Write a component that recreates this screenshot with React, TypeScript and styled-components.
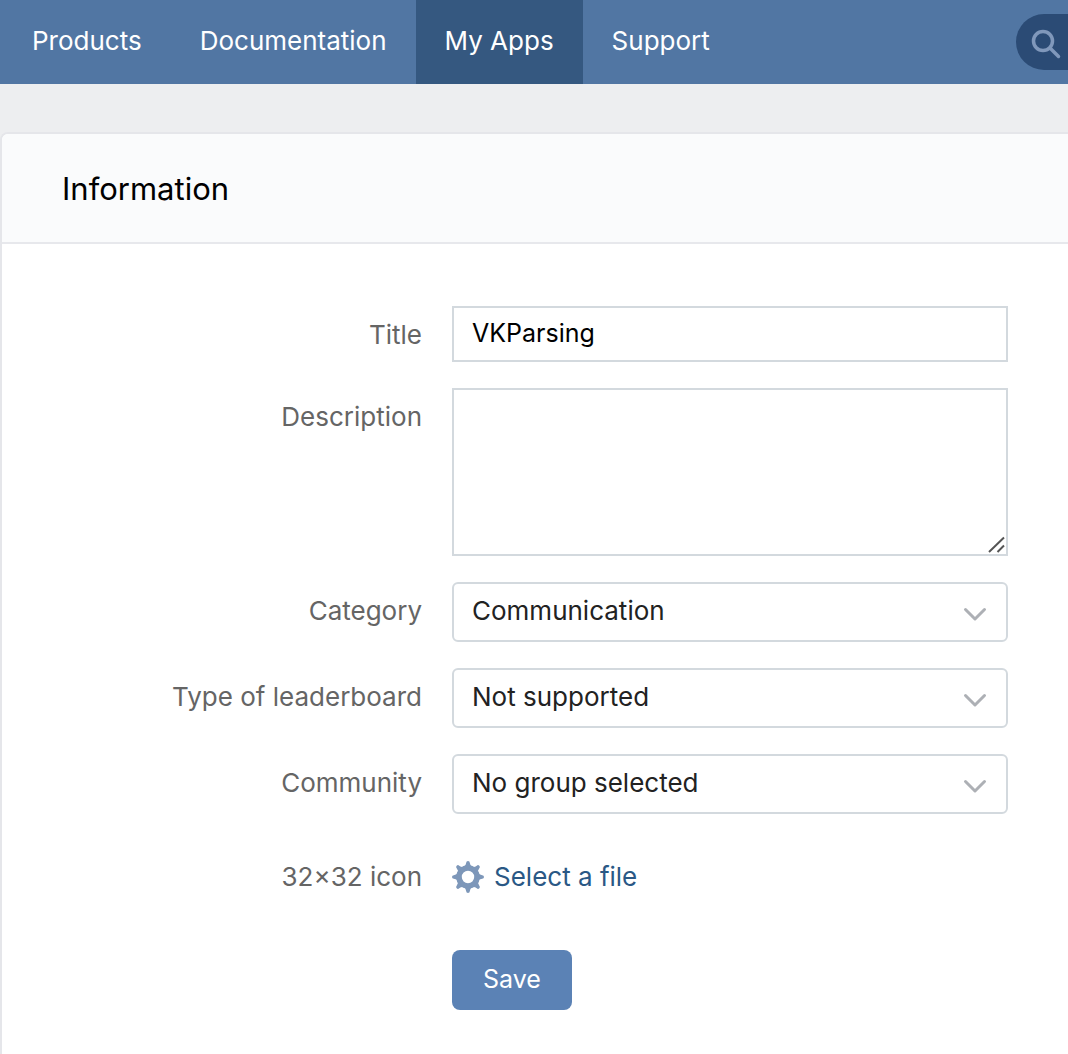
import React from "react";
import styled, { createGlobalStyle } from "styled-components";

const GlobalStyle = createGlobalStyle`
  *, *::before, *::after {
    box-sizing: border-box;
  }

  html, body, #root {
    min-height: 100vh;
  }

  body {
    margin: 0;
    background: #edeef0;
    color: #000;
    font-family: Inter, "Liberation Sans", sans-serif;
    font-size: 26px;
    line-height: 30px;
  }

  #root {
    display: flex;
    flex-direction: column;
  }

  button, input, select, textarea {
    font: inherit;
    margin: 0;
  }
`;

const TopBar = styled.header`
  display: flex;
  justify-content: space-between;
  align-items: center;
  height: 84px;
  padding-left: 3px;
  background: #5176a3;
`;

const Nav = styled.nav`
  display: flex;
  align-self: stretch;
`;

const NavLink = styled.a<{ $active?: boolean }>`
  display: flex;
  align-items: center;
  padding: 0 29px 2px;
  background: ${({ $active }) => ($active ? "#355880" : "transparent")};
  color: #fff;
  text-decoration: none;
  white-space: nowrap;
`;

const SearchButton = styled.button`
  display: flex;
  align-items: center;
  width: 52px;
  height: 56px;
  padding: 4px 0 0 15px;
  border: 0;
  border-radius: 28px 0 0 28px;
  background: #2b4b75;
  color: #8098bb;
  cursor: pointer;
`;

const Card = styled.main`
  flex: 1;
  margin-top: 48px;
  border: 2px solid #e5e6ea;
  border-width: 2px 0 0 2px;
  border-radius: 8px 0 0 0;
  background: #fff;
`;

const CardHeader = styled.div`
  padding: 37px 60px 35px;
  border-bottom: 2px solid #e7e8ec;
  border-radius: 6px 0 0 0;
  background: #fafbfc;
`;

const CardTitle = styled.h1`
  margin: 0;
  font-size: 31px;
  line-height: 36px;
  font-weight: 400;
`;

const Form = styled.form`
  display: flex;
  flex-direction: column;
  gap: 26px;
  padding: 62px 60px 44px;
`;

const Row = styled.div`
  display: grid;
  grid-template-columns: 360px minmax(0, 1fr);
  column-gap: 30px;
`;

const FileRow = styled(Row)`
  align-items: center;
  padding: 21px 0 31px;
`;

const Label = styled.label`
  padding-top: 14px;
  color: #656565;
  text-align: right;
`;

const FileLabel = styled.span`
  color: #656565;
  text-align: right;
`;

const TextInput = styled.input`
  width: 100%;
  height: 56px;
  padding: 0 18px 2px;
  border: 2px solid #d3d9de;
  border-radius: 0;
  background: #fff;
  color: #000;
  font-size: 25px;
  outline: none;
`;

const TextAreaWrap = styled.div`
  position: relative;
  display: flex;
`;

const TextArea = styled.textarea`
  width: 100%;
  height: 168px;
  padding: 10px 18px;
  border: 2px solid #d3d9de;
  border-radius: 0;
  background: #fff;
  font-size: 25px;
  outline: none;
  resize: vertical;

  &::-webkit-resizer {
    background: transparent;
  }
`;

const Grip = styled.svg`
  position: absolute;
  right: 2px;
  bottom: 2px;
  pointer-events: none;
`;

const SelectWrap = styled.div`
  position: relative;
`;

const Select = styled.select`
  display: block;
  width: 100%;
  height: 60px;
  padding: 0 60px 2px 18px;
  border: 2px solid #d3d9de;
  border-radius: 6px;
  background: #fff;
  color: #222;
  appearance: none;
  outline: none;
`;

const Chevron = styled.svg`
  position: absolute;
  top: 24px;
  right: 20px;
  pointer-events: none;
`;

const FileLink = styled.a`
  display: flex;
  align-items: center;
  justify-self: start;
  gap: 10px;
  color: #2a5885;
  text-decoration: none;
`;

const SaveButton = styled.button`
  grid-column: 2;
  justify-self: start;
  height: 60px;
  padding: 0 31px 2px;
  border: 0;
  border-radius: 8px;
  background: #5b82b5;
  color: #fff;
  font-size: 25px;
  cursor: pointer;
`;

const navItems = ["Products", "Documentation", "My Apps", "Support"];

const selects = [
  { id: "category", label: "Category", value: "Communication" },
  { id: "leaderboard", label: "Type of leaderboard", value: "Not supported" },
  { id: "community", label: "Community", value: "No group selected" },
];

const SearchIcon = () => (
  <svg width="30" height="30" viewBox="0 0 30 30" fill="none" stroke="currentColor" aria-hidden="true">
    <circle cx="12" cy="12" r="9.5" strokeWidth="3.5" />
    <path d="M19 19l8.5 8.5" strokeWidth="3.5" strokeLinecap="round" />
  </svg>
);

const teeth = [0, 45, 90, 135, 180, 225, 270, 315];

const GearIcon = () => (
  <svg width="32" height="32" viewBox="0 0 32 32" aria-hidden="true">
    <circle cx="16" cy="16" r="9" fill="none" stroke="#7d97b9" strokeWidth="5.6" />
    {teeth.map((angle) => (
      <path
        key={angle}
        d="M11.5 6q2.4-.9 2.7-4.2a1.8 1.8 0 0 1 3.6 0q.3 3.3 2.7 4.2z"
        fill="#7d97b9"
        transform={`rotate(${angle} 16 16)`}
      />
    ))}
  </svg>
);

export default function App() {
  return (
    <>
      <GlobalStyle />
      <TopBar>
        <Nav>
          {navItems.map((item) => (
            <NavLink key={item} href="#" $active={item === "My Apps"}>
              {item}
            </NavLink>
          ))}
        </Nav>
        <SearchButton type="button" aria-label="Search">
          <SearchIcon />
        </SearchButton>
      </TopBar>
      <Card>
        <CardHeader>
          <CardTitle>Information</CardTitle>
        </CardHeader>
        <Form onSubmit={(event) => event.preventDefault()}>
          <Row>
            <Label htmlFor="title">Title</Label>
            <TextInput id="title" type="text" defaultValue="VKParsing" />
          </Row>
          <Row>
            <Label htmlFor="description">Description</Label>
            <TextAreaWrap>
              <TextArea id="description" />
              <Grip width="18" height="18" viewBox="0 0 18 18" fill="none" stroke="#555" strokeWidth="2" aria-hidden="true">
                <path d="M1 16L16 1.5M9.500 16l6.500-6.500" />
              </Grip>
            </TextAreaWrap>
          </Row>
          {selects.map(({ id, label, value }) => (
            <Row key={id}>
              <Label htmlFor={id}>{label}</Label>
              <SelectWrap>
                <Select id={id} defaultValue={value}>
                  <option>{value}</option>
                </Select>
                <Chevron width="26" height="16" viewBox="0 0 26 16" fill="none" stroke="#adb0b5" strokeWidth="3" strokeLinecap="round" strokeLinejoin="round" aria-hidden="true">
                  <path d="M3.500 3.500l9.500 9.500 9.500-9.500" />
                </Chevron>
              </SelectWrap>
            </Row>
          ))}
          <FileRow>
            <FileLabel>32×32 icon</FileLabel>
            <FileLink href="#">
              <GearIcon />
              Select a file
            </FileLink>
          </FileRow>
          <Row>
            <SaveButton type="submit">Save</SaveButton>
          </Row>
        </Form>
      </Card>
    </>
  );
}
